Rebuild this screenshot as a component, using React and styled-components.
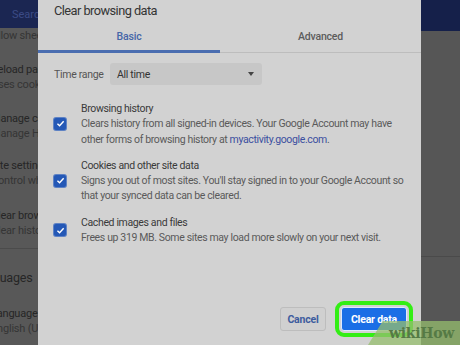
import React from "react";
import styled, { createGlobalStyle } from "styled-components";

const GlobalStyle = createGlobalStyle`
  html, body {
    margin: 0;
    padding: 0;
    overflow: hidden;
    background: #575757;
  }
  body {
    font-family: Roboto, "Liberation Sans", sans-serif;
  }
`;

const Screen = styled.div`
  position: relative;
  width: 460px;
  height: 345px;
  overflow: hidden;
  background: #585858;
  display: flex;
`;

const SettingsPage = styled.div`
  flex: 1;
  display: flex;
  flex-direction: column;
`;

const SettingsHeader = styled.div`
  height: 28px;
  flex-shrink: 0;
  background: #1b2652;
  display: flex;
  align-items: center;
  padding-left: 12px;
  font-size: 11px;
  color: #3c4b86;
`;

const SettingsList = styled.div`
  display: flex;
  flex-direction: column;
  margin-left: -9px;
  font-size: 11px;
  letter-spacing: -0.2px;
  white-space: nowrap;
`;

const SettingRow = styled.div`
  display: flex;
  flex-direction: column;
  line-height: 15px;
  padding-top: ${(p) => p.$top || 0}px;
  color: #262626;
`;

const SubText = styled.span`
  color: #353535;
`;

const Divider = styled.div`
  height: 1px;
  background: #4b4b4b;
  margin-top: 10px;
  width: 460px;
`;

const SectionHeading = styled.div`
  font-size: 12.5px;
  color: #262626;
  margin: 21px 0 0 -18px;
  line-height: 16px;
`;

const RightShade = styled.div`
  position: absolute;
  right: 0;
  top: 0;
  width: 39px;
  height: 345px;
  background: #565656;
  display: flex;
  flex-direction: column;
`;

const RightHeader = styled.div`
  height: 31px;
  background: #15204a;
`;

const RightLine = styled.div`
  margin-top: 225px;
  height: 1px;
  background: #4a4a4a;
`;

const Dialog = styled.div`
  position: absolute;
  left: 38px;
  top: 0;
  width: 383px;
  height: 345px;
  background: #d2d2d2;
  display: flex;
  flex-direction: column;
  color: #555;
`;

const Title = styled.div`
  height: 22px;
  line-height: 22px;
  padding-left: 16px;
  font-size: 12.8px;
  letter-spacing: -0.55px;
  color: #353535;
`;

const Tabs = styled.div`
  display: flex;
  height: 31px;
  box-shadow: inset 0 -1px 0 #bdbdbd;
`;

const Tab = styled.div`
  width: ${(p) => p.$w}px;
  display: flex;
  align-items: center;
  justify-content: center;
  box-sizing: border-box;
  padding-top: 1px;
  font-size: 10.5px;
  font-weight: 500;
  letter-spacing: -0.2px;
  color: ${(p) => (p.$active ? "#4566a8" : "#5c5c5c")};
  border-bottom: 3px solid ${(p) => (p.$active ? "#4a6db0" : "transparent")};
`;

const Body = styled.div`
  flex: 1;
  display: flex;
  flex-direction: column;
  padding: 0 14px 0 16px;
`;

const RangeRow = styled.div`
  display: flex;
  align-items: center;
  margin-top: 10px;
  height: 22px;
`;

const RangeLabel = styled.span`
  width: 56px;
  font-size: 10.5px;
  letter-spacing: -0.3px;
  color: #555;
`;

const Select = styled.div`
  width: 152px;
  height: 22px;
  box-sizing: border-box;
  border-radius: 3px;
  background: #c7c7c7;
  display: flex;
  align-items: center;
  justify-content: space-between;
  padding: 0 8px 0 7px;
  font-size: 10.5px;
  letter-spacing: -0.3px;
  color: #333;
`;

const Caret = styled.span`
  width: 0;
  height: 0;
  border-left: 3.5px solid transparent;
  border-right: 3.5px solid transparent;
  border-top: 4px solid #444;
`;

const Options = styled.div`
  display: flex;
  flex-direction: column;
  gap: 11px;
  margin-top: 16px;
`;

const Option = styled.div`
  display: flex;
  align-items: center;
  gap: 15px;
`;

const Box = styled.span`
  width: 12px;
  height: 12px;
  flex-shrink: 0;
  border-radius: 2px;
  background: #2458b6;
  box-shadow: 0 0 0 1px #5e82c4;
  display: flex;
  align-items: center;
  justify-content: center;
`;

const OptionText = styled.div`
  display: flex;
  flex-direction: column;
  line-height: 15.3px;
  font-size: 10.5px;
  letter-spacing: -0.36px;
  white-space: nowrap;
`;

const OptionTitle = styled.span`
  color: #3a3a3a;
`;

const OptionDesc = styled.span`
  color: #5a5a5a;
`;

const Link = styled.span`
  color: #3b4fa0;
`;

const Footer = styled.div`
  margin-top: auto;
  display: flex;
  justify-content: flex-end;
  gap: 15px;
  padding-bottom: 14px;
`;

const Button = styled.button`
  height: 24px;
  box-sizing: border-box;
  border-radius: 3px;
  font-family: Roboto, "Liberation Sans", sans-serif;
  font-size: 10.5px;
  font-weight: 700;
  letter-spacing: -0.2px;
  padding: 0;
  width: ${(p) => p.$w}px;
  border: 1px solid ${(p) => (p.$primary ? "#dfe9ff" : "#bdbdbd")};
  background: ${(p) => (p.$primary ? "#1a6ee6" : "#d0d0d0")};
  color: ${(p) => (p.$primary ? "#ffffff" : "#3d5c9e")};
  outline: ${(p) => (p.$primary ? "4px solid #33ee15" : "none")};
  outline-offset: 2px;
`;

const Watermark = styled.div`
  position: absolute;
  right: 0;
  bottom: 0;
  width: 92px;
  height: 24px;
  background: rgba(150, 190, 110, 0.75);
  clip-path: polygon(16% 0, 100% 0, 100% 100%, 0 100%);
  display: flex;
  align-items: center;
  justify-content: flex-end;
  padding-right: 6px;
  box-sizing: border-box;
  font-family: "DejaVu Serif", "Liberation Serif", serif;
  font-weight: 700;
  font-size: 14px;
  color: #557a45;
  letter-spacing: -0.3px;
`;

const Check = () => (
  <svg width="9" height="9" viewBox="0 0 10 10">
    <path d="M1.6 5.2 L4 7.4 L8.5 2.6" fill="none" stroke="#fff" strokeWidth="1.6" />
  </svg>
);

const options = [
  {
    title: "Browsing history",
    lines: [
      "Clears history from all signed-in devices. Your Google Account may have",
      <>
        other forms of browsing history at <Link>myactivity.google.com</Link>.
      </>,
    ],
  },
  {
    title: "Cookies and other site data",
    lines: [
      "Signs you out of most sites. You'll stay signed in to your Google Account so",
      "that your synced data can be cleared.",
    ],
  },
  {
    title: "Cached images and files",
    lines: ["Frees up 319 MB. Some sites may load more slowly on your next visit."],
  },
];

const rows = [
  { top: 0, a: "Allow sheets", b: "" },
  { top: 19, a: "Reload pages", b: "Uses cookies" },
  { top: 19, a: "Manage certificates", b: "Manage HTTPS" },
  { top: 17, a: "Site settings", b: "Control what" },
  { top: 20, a: "Clear browsing data", b: "Clear history" },
];

export default function App() {
  return (
    <>
      <GlobalStyle />
      <Screen>
        <SettingsPage>
          <SettingsHeader>Search</SettingsHeader>
          <SettingsList>
            {rows.map((r, i) => (
              <SettingRow key={i} $top={r.top}>
                {i === 0 ? <SubText>{r.a}</SubText> : <span>{r.a}</span>}
                {r.b && <SubText>{r.b}</SubText>}
              </SettingRow>
            ))}
            <Divider />
            <SectionHeading>Languages</SectionHeading>
            <SettingRow $top={20}>
              <span>Language</span>
              <SubText>English (United States)</SubText>
            </SettingRow>
          </SettingsList>
        </SettingsPage>
        <RightShade>
          <RightHeader />
          <RightLine />
        </RightShade>
        <Dialog>
          <Title>Clear browsing data</Title>
          <Tabs>
            <Tab $w={182} $active>
              Basic
            </Tab>
            <Tab $w={201}>Advanced</Tab>
          </Tabs>
          <Body>
            <RangeRow>
              <RangeLabel>Time range</RangeLabel>
              <Select>
                All time
                <Caret />
              </Select>
            </RangeRow>
            <Options>
              {options.map((o) => (
                <Option key={o.title}>
                  <Box>
                    <Check />
                  </Box>
                  <OptionText>
                    <OptionTitle>{o.title}</OptionTitle>
                    {o.lines.map((l, i) => (
                      <OptionDesc key={i}>{l}</OptionDesc>
                    ))}
                  </OptionText>
                </Option>
              ))}
            </Options>
            <Footer>
              <Button $w={46}>Cancel</Button>
              <Button $w={66} $primary>
                Clear data
              </Button>
            </Footer>
          </Body>
        </Dialog>
        <Watermark>wikiHow</Watermark>
      </Screen>
    </>
  );
}
